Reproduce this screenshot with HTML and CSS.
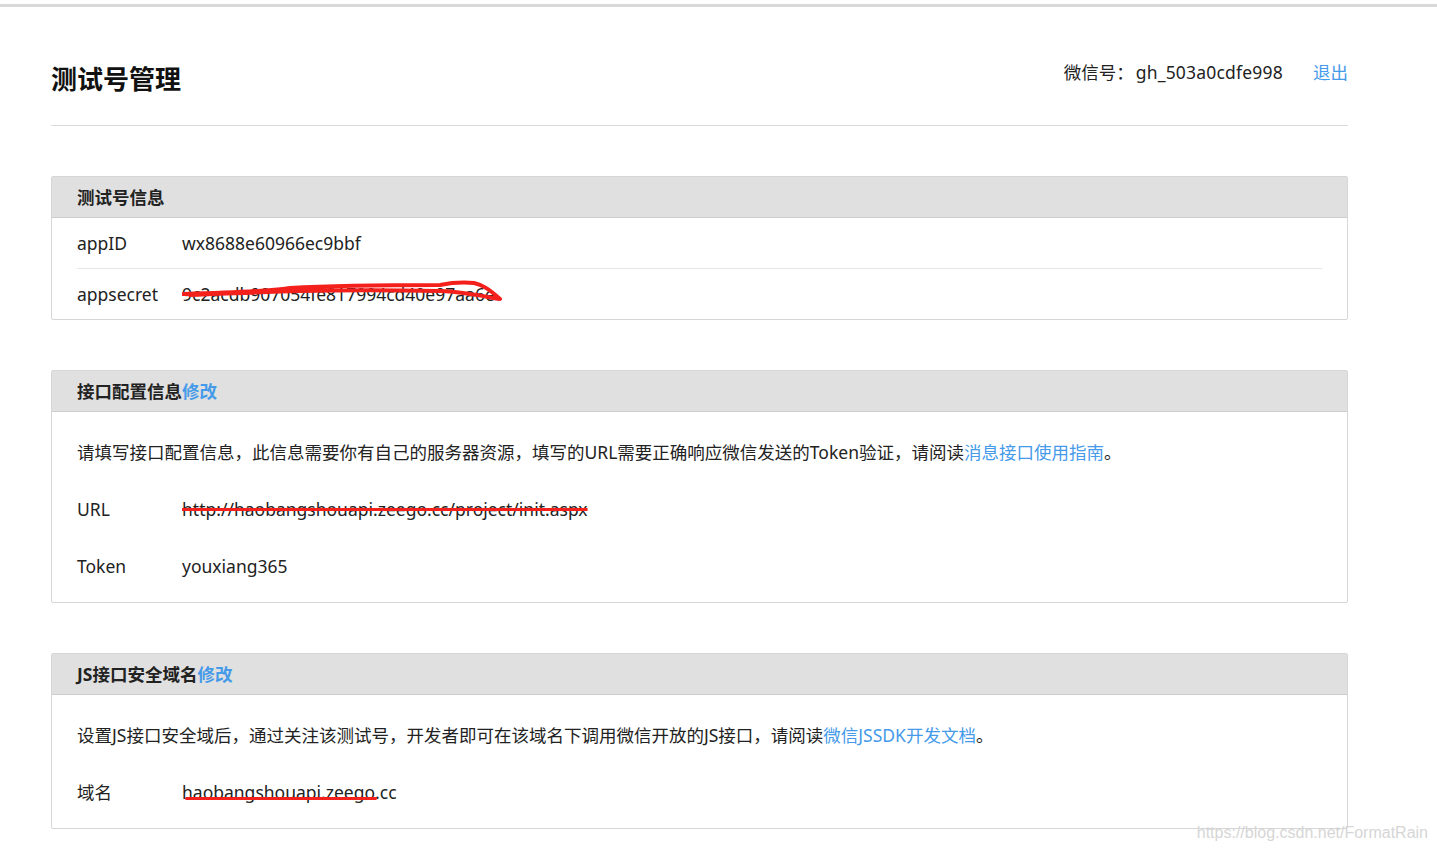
FILE: index.html
```html
<!DOCTYPE html>
<html lang="zh-CN">
<head>
    <meta charset="UTF-8">
    <title>测试号管理</title>
    <link rel="stylesheet" href="styles.css">
</head>
<body>
    <div class="topbar"></div>
    <div class="page">
        <div class="page-head">
            <h1 class="title">测试号管理</h1>
            <div class="account">
                <span>微信号：</span>
                <span class="account-id">gh_503a0cdfe998</span>
                <a class="link logout" href="#">退出</a>
            </div>
        </div>

        <!-- 测试号信息 -->
        <div class="panel">
            <div class="panel-head">测试号信息</div>
            <div class="panel-body info">
                <div class="info-row">
                    <span class="label">appID</span>
                    <span class="value">wx8688e60966ec9bbf</span>
                </div>
                <div class="info-row">
                    <span class="label">appsecret</span>
                    <span class="value scribbled">9c2acdb907054fe817994cd40e97aa6e
                        <svg class="scribble" viewBox="0 0 330 30" width="330" height="30">
                            <path d="M1 14 C40 13 80 12 108 8 C160 5 220 5 258 5 C268 3 280 2 292 3 C300 5 306 8 318 19 C306 17 296 15 288 14 C275 12 265 11 258 11 C210 10 160 10 118 11 C80 12 40 14 8 15"
                                  fill="none" stroke="#f3201c" stroke-width="4" stroke-linecap="round" stroke-linejoin="round"/>
                        </svg>
                    </span>
                </div>
            </div>
        </div>

        <!-- 接口配置信息 -->
        <div class="panel">
            <div class="panel-head">接口配置信息<a class="link" href="#">修改</a></div>
            <div class="panel-body">
                <p class="desc">请填写接口配置信息，此信息需要你有自己的服务器资源，填写的URL需要正确响应微信发送的Token验证，请阅读<a class="link" href="#">消息接口使用指南</a>。</p>
                <div class="field">
                    <span class="label">URL</span>
                    <span class="value struck">http://haobangshouapi.zeego.cc/project/init.aspx</span>
                </div>
                <div class="field">
                    <span class="label">Token</span>
                    <span class="value">youxiang365</span>
                </div>
            </div>
        </div>

        <!-- JS接口安全域名 -->
        <div class="panel">
            <div class="panel-head">JS接口安全域名<a class="link" href="#">修改</a></div>
            <div class="panel-body">
                <p class="desc">设置JS接口安全域后，通过关注该测试号，开发者即可在该域名下调用微信开放的JS接口，请阅读<a class="link" href="#">微信JSSDK开发文档</a>。</p>
                <div class="field">
                    <span class="label">域名</span>
                    <span class="value"><span class="marked">haobangshouapi.zeego</span>.cc</span>
                </div>
            </div>
        </div>
    </div>

    <div class="watermark">https://blog.csdn.net/FormatRain</div>
</body>
</html>
```

FILE: styles.css
```css
html, body {
    margin: 0;
    background: #fff;
    color: #222;
    font-family: "Noto Sans", "Noto Sans CJK SC", sans-serif;
    font-size: 17.5px;
}
.topbar {
    height: 3px;
    margin-top: 4px;
    background: #d9d9d9;
}
.page {
    width: 1297px;
    margin-left: 51px;
    padding-bottom: 22px;
}
.page-head {
    display: flex;
    justify-content: space-between;
    align-items: flex-start;
    height: 119px;
    box-sizing: border-box;
    padding-top: 52px;
    border-bottom: 1px solid #dcdcdc;
}
.title {
    margin: 2px 0 0;
    font-size: 26px;
    line-height: 36px;
    font-weight: bold;
    color: #111;
}
.account {
    display: flex;
    line-height: 26px;
    font-size: 17.5px;
}
.account-id {
    margin-left: 2px;
    letter-spacing: 0.2px;
}
.logout {
    margin-left: 30px;
}
.link {
    color: #459ae9;
    text-decoration: none;
}
.panel {
    margin-top: 50px;
    border: 1px solid #d6d6d6;
    border-radius: 2px;
    background: #fff;
}
.panel-head {
    height: 40px;
    line-height: 40px;
    padding: 0 25px;
    background: #e0e0e0;
    border-bottom: 1px solid #cdcdcd;
    font-weight: bold;
}
.panel-body {
    padding: 25px 25px 21px;
}
.panel-body.info {
    padding: 0 25px;
}
.info-row {
    display: flex;
    height: 50px;
    line-height: 50px;
}
.info-row + .info-row {
    border-top: 1px solid #e6e6e6;
}
.label {
    width: 105px;
    flex-shrink: 0;
}
.value {
    position: relative;
}
.scribble {
    position: absolute;
    left: 0;
    top: calc(50% - 14px);
}
.desc {
    margin: 0;
    line-height: 30px;
}
.field {
    display: flex;
    line-height: 30px;
    margin-top: 27px;
}
.struck {
    text-decoration: line-through;
    text-decoration-color: #f3201c;
    text-decoration-thickness: 3px;
}
.marked {
    position: relative;
}
.marked::after {
    content: "";
    position: absolute;
    left: 3px;
    right: -2px;
    top: 17px;
    height: 3px;
    border-radius: 2px;
    background: #f3201c;
}
.watermark {
    position: absolute;
    top: 824px;
    right: 9px;
    font-family: "Liberation Sans", Arial, sans-serif;
    font-size: 16px;
    color: #d6d6d6;
}
```
